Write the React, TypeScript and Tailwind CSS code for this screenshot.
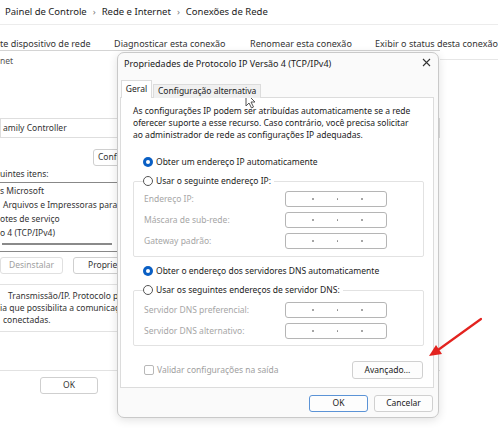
export default function App() {
  return (
    <div className="relative h-[438px] w-[498px] overflow-hidden bg-white font-['Noto_Sans',sans-serif] text-[8.5px] text-[#1b1b1b]">
      {/* Breadcrumb */}
      <div className="flex h-[25px] items-center gap-[6px] border-b border-[#ececec] pl-[5px] text-[9.5px] text-[#222]">
        <span>Painel de Controle</span>
        <span className="text-[#777]">›</span>
        <span>Rede e Internet</span>
        <span className="text-[#777]">›</span>
        <span>Conexões de Rede</span>
      </div>

      {/* Toolbar */}
      <div className="flex h-[25px] items-end whitespace-nowrap text-[9px] leading-[12px] text-[#333]">
        <span className="w-[115px]">te dispositivo de rede</span>
        <span className="w-[137px]">Diagnosticar esta conexão</span>
        <span className="w-[126px]">Renomear esta conexão</span>
        <span>Exibir o status desta conexão</span>
      </div>

      <div className="flex">
        {/* Background window: Propriedades de Ethernet */}
        <div className="flex w-[440px] flex-col border-t border-[#d4d4d4] text-[8.5px] text-[#333]">
          <div className="flex h-[20px] items-center text-[#555]">net</div>
          <div className="mt-[47px] flex h-[20px] items-center border border-[#dedede] pl-[2px]">amily Controller</div>
          <div className="ml-[93px] mt-[11px] flex h-[17px] w-[70px] items-center rounded-[3px] border border-[#cfcfcf] pl-[4px]">Configurar</div>
          <div className="flex h-[16px] items-center">uintes itens:</div>
          <div className="flex h-[70px] w-[160px] flex-col whitespace-nowrap border-y border-[#888] pt-[1px] leading-[14px]">
            <span>s Microsoft</span>
            <span className="pl-[3px]">Arquivos e Impressoras para Rede</span>
            <span>otes de serviço</span>
            <span>o 4 (TCP/IPv4)</span>
            <span className="ml-[2px] mt-[3px] h-[2px] w-[110px] bg-[#8a8a8a]" />
          </div>
          <div className="mt-[5px] flex gap-[10px]">
            <div className="flex h-[17px] w-[63px] items-center justify-center rounded-[3px] border border-[#e0e0e0] text-[#a0a0a0]">Desinstalar</div>
            <div className="flex h-[17px] w-[80px] items-center rounded-[3px] border border-[#cfcfcf] pl-[14px]">Propriedades</div>
          </div>
          <div className="mt-[10px] flex h-[48px] w-[160px] flex-col justify-center whitespace-nowrap border-y border-[#e2e2e2] leading-[12px]">
            <span className="pl-[8px]">Transmissão/IP. Protocolo padrão</span>
            <span>ia que possibilita a comunicação</span>
            <span className="pl-[3px]">conectadas.</span>
          </div>
          <div className="mt-[38px] border-t border-[#e2e2e2]" />
          <div className="ml-[40px] mt-[6px] flex h-[17px] w-[58px] items-center justify-center rounded-[3px] border border-[#cfcfcf]">OK</div>
        </div>
        <div className="mt-[9px] flex-1 border-t border-[#e6e6e6]" />
      </div>

      {/* Dialog */}
      <div className="absolute left-[117px] top-[52px] flex h-[366px] w-[322px] flex-col rounded-[7px] border border-[#c9c9c9] bg-[#fafafa] shadow-[0_2px_10px_rgba(0,0,0,0.12)]">
        <div className="flex h-[20px] items-center justify-between pl-[6px] pr-[7px] pt-[1px] text-[9px]">
          <span>Propriedades de Protocolo IP Versão 4 (TCP/IPv4)</span>
          <svg width="9" height="9" viewBox="0 0 9 9" className="mt-[-2px]">
            <path d="M1 1 L8 8 M8 1 L1 8" stroke="#333" strokeWidth="1.1" />
          </svg>
        </div>

        {/* Tabs */}
        <div className="relative z-10 ml-[3px] mt-[7px] flex h-[18px] items-end">
          <div className="flex h-[18px] w-[31px] items-center justify-center border border-b-0 border-[#dcdcdc] bg-white pb-[1px]">Geral</div>
          <div className="ml-[1px] flex h-[14px] items-center border border-b-0 border-[#dcdcdc] bg-[#f0f0f0] px-[4px]">Configuração alternativa</div>
        </div>

        {/* Panel */}
        <div className="-mt-px ml-[2px] flex h-[291px] w-[314px] flex-col border border-[#dcdcdc] bg-white pl-[12px] pr-[9px]">
          <p className="pt-[7px] leading-[12px]">
            As configurações IP podem ser atribuídas automaticamente se a rede
            <br />
            oferecer suporte a esse recurso. Caso contrário, você precisa solicitar
            <br />
            ao administrador de rede as configurações IP adequadas.
          </p>

          <div className="ml-[10px] mt-[14px] flex h-[14px] items-center gap-[3px]">
            <Radio checked />
            <span>Obter um endereço IP automaticamente</span>
          </div>

          <div className="mt-[12px] flex flex-col rounded-[2px] border border-[#e2e2e2] pb-[7px]">
            <div className="-mt-[8px] ml-[9px] flex h-[14px] items-center gap-[3px] self-start bg-white pr-[3px]">
              <Radio />
              <span>Usar o seguinte endereço IP:</span>
            </div>
            <div className="mt-[3px] flex flex-col gap-[5px]">
              <Field label="Endereço IP:" />
              <Field label="Máscara de sub-rede:" />
              <Field label="Gateway padrão:" />
            </div>
          </div>

          <div className="ml-[10px] mt-[7px] flex h-[14px] items-center gap-[3px]">
            <Radio checked />
            <span>Obter o endereço dos servidores DNS automaticamente</span>
          </div>

          <div className="mt-[12px] flex flex-col rounded-[2px] border border-[#e2e2e2] pb-[6px]">
            <div className="-mt-[8px] ml-[9px] flex h-[14px] items-center gap-[3px] self-start bg-white pr-[3px]">
              <Radio />
              <span>Usar os seguintes endereços de servidor DNS:</span>
            </div>
            <div className="mt-[5px] flex flex-col gap-[5px]">
              <Field label="Servidor DNS preferencial:" />
              <Field label="Servidor DNS alternativo:" />
            </div>
          </div>

          <div className="mt-[15px] flex h-[18px] items-center justify-between">
            <div className="ml-[11px] flex items-center gap-[3px] text-[#a0a0a0]">
              <span className="h-[10px] w-[10px] rounded-[2px] border border-[#b8b8b8] bg-white" />
              <span>Validar configurações na saída</span>
            </div>
            <div className="mr-[1px] flex h-[18px] w-[71px] items-center justify-center rounded-[3px] border border-[#d0d0d0] bg-[#fdfdfd]">Avançado...</div>
          </div>
        </div>

        <div className="mt-[7px] flex justify-end gap-[6px] pr-[5px]">
          <div className="flex h-[17px] w-[59px] items-center justify-center rounded-[3px] border border-[#5b93d6] bg-[#fdfdfd]">OK</div>
          <div className="flex h-[17px] w-[59px] items-center justify-center rounded-[3px] border border-[#d0d0d0] bg-[#fdfdfd]">Cancelar</div>
        </div>
      </div>

      {/* Mouse cursor */}
      <svg className="absolute left-[245px] top-[92px]" width="12" height="17" viewBox="0 0 12 17">
        <path d="M1 1 L1 14 L4 11 L6.5 16 L8.5 15 L6 10 L10 10 Z" fill="#fff" stroke="#555" strokeWidth="1" strokeLinejoin="round" />
      </svg>

      {/* Red arrow annotation */}
      <svg className="absolute left-[420px] top-[310px]" width="70" height="55" viewBox="420 310 70 55">
        <line x1="481" y1="319" x2="438" y2="350" stroke="#e3231f" strokeWidth="2.2" strokeLinecap="round" />
        <path d="M429 356 L436 345 L442 354 Z" fill="#e3231f" />
      </svg>
    </div>
  );
}

function Radio({ checked = false }: { checked?: boolean }) {
  if (checked) {
    return (
      <span className="flex h-[10px] w-[10px] items-center justify-center rounded-full bg-[#0a5fc4]">
        <span className="h-[4px] w-[4px] rounded-full bg-white" />
      </span>
    );
  }
  return <span className="h-[10px] w-[10px] rounded-full border border-[#555] bg-white" />;
}

function Field({ label }: { label: string }) {
  return (
    <div className="flex h-[16px] items-center">
      <span className="w-[151px] pl-[10px] text-[#a6a6a6]">{label}</span>
      <div className="flex h-[16px] w-[102px] items-center gap-[23px] rounded-[3px] border border-[#b5b5b5] pl-[26px]">
        <span className="h-[1.5px] w-[1.5px] rounded-full bg-[#888]" />
        <span className="h-[1.5px] w-[1.5px] rounded-full bg-[#888]" />
        <span className="h-[1.5px] w-[1.5px] rounded-full bg-[#888]" />
      </div>
    </div>
  );
}
